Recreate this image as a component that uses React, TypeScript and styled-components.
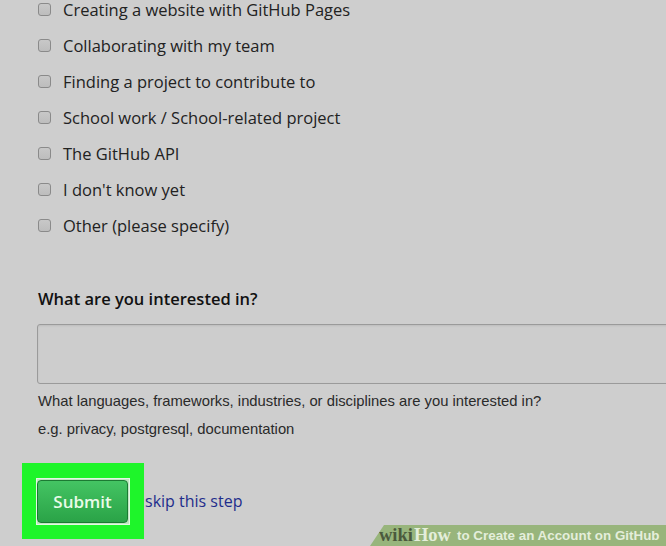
import React from "react";
import styled, { createGlobalStyle } from "styled-components";

const Global = createGlobalStyle`
  html, body { margin: 0; padding: 0; background: #cecece; overflow: hidden; }
  body { width: 666px; height: 546px; font-family: "Open Sans", "Noto Sans", sans-serif; }
`;

const Page = styled.div`
  position: relative;
  width: 666px;
  height: 546px;
  overflow: hidden;
  background: #cecece;
`;

const List = styled.ul`
  list-style: none;
  margin: -9px 0 0 0;
  padding: 0 0 0 38px;
`;

const Row = styled.li`
  display: flex;
  align-items: center;
  height: 36px;
  gap: 12px;
  color: #222;
  font-size: 16.5px;
`;

const Box = styled.span`
  width: 11px;
  height: 11px;
  border: 1px solid #8a8a8a;
  border-radius: 3px;
  background: linear-gradient(#c8c8c8, #bdbdbd);
  flex: none;
`;

const Section = styled.div`
  padding: 45px 0 0 38px;
`;

const Heading = styled.h3`
  margin: 0;
  font-size: 16.5px;
  font-weight: 600;
  color: #111;
  line-height: 22px;
`;

const Area = styled.div`
  margin: 14px 0 0 -1px;
  height: 58px;
  width: 700px;
  border: 1px solid #9a9a9a;
  border-radius: 3px;
  background: #cdcdcd;
  box-shadow: inset 0 1px 2px rgba(0,0,0,0.08);
`;

const Note = styled.p<{ $first?: boolean }>`
  margin: ${(p) => (p.$first ? "3px" : "0")} 0 0 0;
  font-family: "Liberation Sans", Arial, sans-serif;
  font-size: 14.8px;
  color: #2a2a2a;
  line-height: 28px;
`;

const Actions = styled.div`
  display: flex;
  align-items: center;
  margin: 20px 0 0 22px;
`;

const Highlight = styled.div`
  background: #1ef52a;
  padding: 15px 14px 14px 14px;
  display: flex;
`;

const Ring = styled.div`
  border: 1px solid #e6f5e6;
  padding: 1px 1px 1px 0;
  background: #bfe8c0;
  display: flex;
`;

const Submit = styled.button`
  width: 91px;
  height: 43px;
  border: 1px solid #1c7a33;
  border-radius: 4px;
  background: linear-gradient(#44c463, #2aa347);
  color: #eafbe9;
  font-family: "Open Sans", sans-serif;
  font-weight: 600;
  font-size: 17px;
  padding: 0;
`;

const Skip = styled.a`
  margin-left: 1px;
  color: #1f2d8c;
  font-size: 16px;
  text-decoration: none;
`;

const Banner = styled.div`
  position: absolute;
  right: 0;
  bottom: 0;
  height: 21px;
  width: 287px;
  background: #98b57c;
  clip-path: polygon(14px 0, 100% 0, 100% 100%, 0 100%);
  display: flex;
  align-items: center;
  padding-left: 9px;
  font-family: "Liberation Sans", Arial, sans-serif;
  font-weight: 700;
  font-size: 13.4px;
  color: #e4eedb;
  white-space: nowrap;
`;

const Wiki = styled.span`
  font-family: "Liberation Serif", serif;
  font-size: 18.5px;
  color: #4b5a3d;
  margin-right: 1px;
`;

const How = styled.span`
  font-family: "Liberation Serif", serif;
  font-size: 18.5px;
  color: #e4eedb;
  margin-right: 6px;
`;

const options = [
  "Creating a website with GitHub Pages",
  "Collaborating with my team",
  "Finding a project to contribute to",
  "School work / School-related project",
  "The GitHub API",
  "I don't know yet",
  "Other (please specify)",
];

export default function App() {
  return (
    <Page>
      <Global />
      <List>
        {options.map((o) => (
          <Row key={o}>
            <Box />
            {o}
          </Row>
        ))}
      </List>
      <Section>
        <Heading>What are you interested in?</Heading>
        <Area />
        <Note $first>
          What languages, frameworks, industries, or disciplines are you interested in?
        </Note>
        <Note>e.g. privacy, postgresql, documentation</Note>
      </Section>
      <Actions>
        <Highlight>
          <Ring>
            <Submit>Submit</Submit>
          </Ring>
        </Highlight>
        <Skip href="#">skip this step</Skip>
      </Actions>
      <Banner>
        <Wiki>wiki</Wiki>
        <How>How</How>
        to Create an Account on GitHub
      </Banner>
    </Page>
  );
}
